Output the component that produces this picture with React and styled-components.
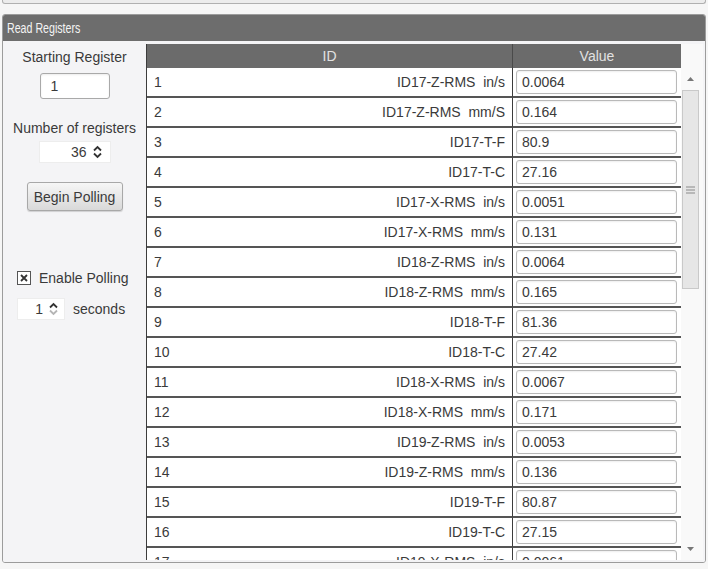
import React from 'react';
import styled, { createGlobalStyle } from 'styled-components';

const GlobalStyle = createGlobalStyle`
  body {
    margin: 0;
    background: #f6f6f6;
    font-family: "Liberation Sans", Arial, sans-serif;
  }
`;

const rows = [
  ['1', 'ID17-Z-RMS  in/s', '0.0064'],
  ['2', 'ID17-Z-RMS  mm/S', '0.164'],
  ['3', 'ID17-T-F', '80.9'],
  ['4', 'ID17-T-C', '27.16'],
  ['5', 'ID17-X-RMS  in/s', '0.0051'],
  ['6', 'ID17-X-RMS  mm/s', '0.131'],
  ['7', 'ID18-Z-RMS  in/s', '0.0064'],
  ['8', 'ID18-Z-RMS  mm/s', '0.165'],
  ['9', 'ID18-T-F', '81.36'],
  ['10', 'ID18-T-C', '27.42'],
  ['11', 'ID18-X-RMS  in/s', '0.0067'],
  ['12', 'ID18-X-RMS  mm/s', '0.171'],
  ['13', 'ID19-Z-RMS  in/s', '0.0053'],
  ['14', 'ID19-Z-RMS  mm/s', '0.136'],
  ['15', 'ID19-T-F', '80.87'],
  ['16', 'ID19-T-C', '27.15'],
  ['17', 'ID19-X-RMS  in/s', '0.0061'],
];

const Page = styled.div`
  width: 708px;
  height: 569px;
  overflow: hidden;
`;

const TopStrip = styled.div`
  margin: 0 2px;
  height: 3px;
  background: #ececec;
  border: 1px solid #b0b0b0;
  border-top: none;
  border-radius: 0 0 3px 3px;
`;

const Panel = styled.section`
  margin: 10px 2px 0;
  height: 547px;
  border: 1px solid #9c9c9c;
  border-radius: 3px;
  overflow: hidden;
  display: flex;
  flex-direction: column;
`;

const PanelHeader = styled.header`
  height: 26px;
  line-height: 26px;
  padding-left: 4px;
  background: #6d6d6d;
  color: #f4f4f4;
  font-size: 14px;
`;

// the title face is condensed in the original
const Title = styled.span`
  display: inline-block;
  transform: scaleX(0.76);
  transform-origin: left center;
  white-space: nowrap;
`;

const Body = styled.div`
  flex: 1;
  min-height: 0;
  display: flex;
  background: #f4f4f6;
`;

const Side = styled.aside`
  width: 143px;
  flex-shrink: 0;
  display: flex;
  flex-direction: column;
  color: #3a3a3a;
  font-size: 14px;
`;

const Centered = styled.div`
  display: flex;
  flex-direction: column;
  align-items: center;
`;

const Label = styled.div`
  line-height: 16px;
  margin-top: ${p => p.$top}px;
  white-space: nowrap;
`;

const TextInput = styled.div`
  box-sizing: border-box;
  width: 70px;
  height: 26px;
  margin-top: 8px;
  padding-left: 10px;
  line-height: 24px;
  background: #fff;
  border: 1px solid #a9a9a9;
  border-radius: 3px;
  box-shadow: inset 0 1px 2px rgba(0, 0, 0, 0.08);
`;

const Spinner = styled.div`
  box-sizing: border-box;
  width: ${p => p.$w}px;
  height: 22px;
  margin-top: ${p => p.$top || 0}px;
  display: flex;
  align-items: center;
  justify-content: flex-end;
  gap: 6px;
  padding-right: ${p => p.$pr}px;
  background: #fff;
  border: 1px solid #ededed;
`;

const Arrows = ({ dim }) => (
  <svg width="9" height="14" viewBox="0 0 9 14">
    <path d="M1 5.5 L4.5 2 L8 5.5" fill="none" stroke="#333" strokeWidth="1.8" />
    <path d="M1 8.5 L4.5 12 L8 8.5" fill="none" stroke={dim ? '#b5b5b5' : '#333'} strokeWidth="1.8" />
  </svg>
);

const Button = styled.div`
  box-sizing: border-box;
  width: 96px;
  height: 29px;
  margin-top: 19px;
  display: flex;
  align-items: center;
  justify-content: center;
  background: linear-gradient(#f6f6f6, #d9d9d9);
  border: 1px solid #a8a8a8;
  border-radius: 3px;
  box-shadow: 0 1px 1px rgba(0, 0, 0, 0.15);
`;

const Lower = styled.div`
  padding-left: 14px;
  margin-top: 59px;
  display: flex;
  flex-direction: column;
  gap: 12px;
`;

const Line = styled.div`
  display: flex;
  align-items: center;
  gap: ${p => p.$gap}px;
  white-space: nowrap;
`;

const CheckBox = () => (
  <svg width="14" height="14" viewBox="0 0 14 14">
    <rect x="0.5" y="0.5" width="13" height="13" fill="#fff" stroke="#555" />
    <path d="M4 4 L10 10 M10 4 L4 10" stroke="#333" strokeWidth="1.8" />
  </svg>
);

const TableArea = styled.div`
  flex: 1;
  min-width: 0;
  display: flex;
  padding: 3px 2px 2px 0;
  overflow: hidden;
`;

const Table = styled.div`
  width: 535px;
  flex-shrink: 0;
  display: grid;
  grid-template-columns: 366px 169px;
  grid-auto-rows: 30px;
  grid-template-rows: 24px;
  align-content: start;
  border-left: 1px solid #3c3c3c;
  box-sizing: border-box;
  background: #fff;
  overflow: hidden;
`;

const HeadCell = styled.div`
  background: #6b6b6b;
  color: #e2e2e2;
  font-size: 14px;
  display: flex;
  align-items: center;
  justify-content: center;
  border-right: 1px solid #4a4a4a;
`;

const IdCell = styled.div`
  display: flex;
  align-items: center;
  justify-content: space-between;
  padding: 0 7px;
  border-bottom: 2px solid #555;
  border-right: 1px solid #3c3c3c;
  color: #3a3a3a;
  font-size: 14px;
  white-space: pre;
`;

const ValueCell = styled.div`
  padding: 2px 4px 0 3px;
  border-bottom: 2px solid #555;
  border-right: 1px solid #3c3c3c;
`;

const ValueInput = styled.div`
  box-sizing: border-box;
  height: 24px;
  line-height: 22px;
  padding-left: 5px;
  background: #fff;
  border: 1px solid #b9b9b9;
  border-radius: 3px;
  color: #3a3a3a;
  font-size: 14px;
  box-shadow: inset 0 1px 2px rgba(0, 0, 0, 0.07);
`;

const Scrollbar = styled.div`
  width: 22px;
  flex-shrink: 0;
  padding-top: 24px;
  display: flex;
  flex-direction: column;
  background: #f9f9f9;
`;

const ArrowBox = styled.div`
  height: 22px;
  display: flex;
  align-items: center;
  justify-content: center;
  padding-right: 4px;
`;

const Thumb = styled.div`
  box-sizing: border-box;
  width: 17px;
  height: 199px;
  margin-left: 1px;
  background: #e6e6e6;
  border: 1px solid #c9c9c9;
  display: flex;
  align-items: center;
  justify-content: center;
`;

const Track = styled.div`
  flex: 1;
`;

const Grip = () => (
  <svg width="9" height="8" viewBox="0 0 9 8">
    <path d="M0 1 H9 M0 4 H9 M0 7 H9" stroke="#8a8a8a" strokeWidth="1" />
  </svg>
);

const Tri = ({ up }) => (
  <svg width="7" height="4" viewBox="0 0 7 4">
    <path d={up ? 'M0 4 L3.5 0 L7 4 Z' : 'M0 0 L3.5 4 L7 0 Z'} fill="#777" />
  </svg>
);

export default function App() {
  return (
    <Page>
      <GlobalStyle />
      <TopStrip />
      <Panel>
        <PanelHeader><Title>Read Registers</Title></PanelHeader>
        <Body>
          <Side>
            <Centered>
              <Label $top={8}>Starting Register</Label>
              <TextInput>1</TextInput>
              <Label $top={21}>Number of registers</Label>
              <Spinner $w={72} $pr={8} $top={5}>
                36 <Arrows />
              </Spinner>
              <Button>Begin Polling</Button>
            </Centered>
            <Lower>
              <Line $gap={8}>
                <CheckBox />
                Enable Polling
              </Line>
              <Line $gap={8}>
                <Spinner $w={48} $pr={6}>
                  1 <Arrows dim />
                </Spinner>
                seconds
              </Line>
            </Lower>
          </Side>
          <TableArea>
            <Table>
              <HeadCell>ID</HeadCell>
              <HeadCell>Value</HeadCell>
              {rows.map(([n, id, v]) => (
                <React.Fragment key={n}>
                  <IdCell>
                    <span>{n}</span>
                    <span>{id}</span>
                  </IdCell>
                  <ValueCell>
                    <ValueInput>{v}</ValueInput>
                  </ValueCell>
                </React.Fragment>
              ))}
            </Table>
            <Scrollbar>
              <ArrowBox><Tri up /></ArrowBox>
              <Thumb><Grip /></Thumb>
              <Track />
              <ArrowBox><Tri /></ArrowBox>
            </Scrollbar>
          </TableArea>
        </Body>
      </Panel>
    </Page>
  );
}
